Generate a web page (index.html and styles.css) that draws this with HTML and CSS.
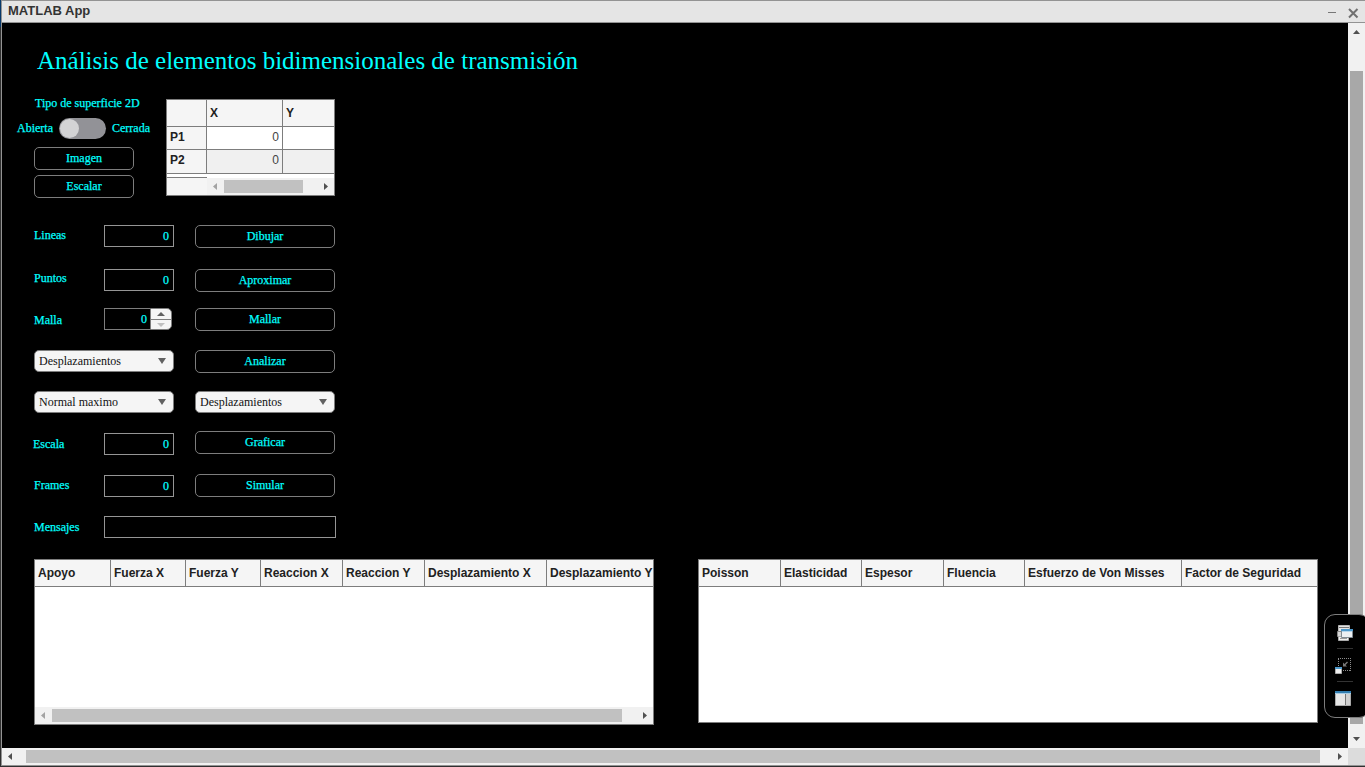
FILE: index.html
```html
<!DOCTYPE html>
<html lang="es">
<head>
<meta charset="utf-8">
<title>MATLAB App</title>
<link rel="stylesheet" href="styles.css">
</head>
<body>
<div class="window">
  <header class="titlebar">
    <span class="caption">MATLAB App</span>
    <svg class="winbtns" width="32" height="14" viewBox="0 0 32 14">
      <path d="M1 6.500h8" stroke="#777" stroke-width="1"/>
      <path d="M22 3l8.500 8.500M30.500 3l-8.500 8.500" stroke="#707070" stroke-width="2"/>
    </svg>
  </header>
  <div class="middle">
    <main class="canvas">
      <h1 class="heading">Análisis de elementos bidimensionales de transmisión</h1>
      <section class="top">
        <div class="surface">
          <div class="surface-title">Tipo de superficie 2D</div>
          <div class="switch-row"><span class="sw-left">Abierta</span><span class="switch"><i class="knob"></i></span><span class="sw-right">Cerrada</span></div>
          <button class="btn small">Imagen</button>
          <button class="btn small">Escalar</button>
        </div>
        <div class="points">
          <div class="prow head"><span class="rh"></span><span class="cx">X</span><span class="cy">Y</span></div>
          <div class="prow p1"><span class="rh">P1</span><span class="cx">0</span><span class="cy"></span></div>
          <div class="prow p2"><span class="rh">P2</span><span class="cx">0</span><span class="cy"></span></div>
          <div class="gap"><span></span></div>
          <div class="pfoot">
            <span class="corner"></span>
            <div class="hbar">
              <svg class="arr" width="17" height="17"><path d="M10 5v7l-4-3.500z" fill="#a3a3a3"/></svg>
              <span class="thumb pthumb"></span>
              <svg class="arr end" width="17" height="17"><path d="M7 5v7l4-3.500z" fill="#505050"/></svg>
            </div>
          </div>
        </div>
      </section>
      <section class="form">
        <div class="row r1"><label>Lineas</label><span class="field">0</span><button class="btn">Dibujar</button></div>
        <div class="row r2"><label>Puntos</label><span class="field">0</span><button class="btn">Aproximar</button></div>
        <div class="row r3"><label>Malla</label>
          <span class="spinner"><span class="val">0</span><span class="steps"><span class="up"><svg width="8" height="4"><path d="M0 4h8l-4-4z" fill="#616161"/></svg></span><span class="down"><svg width="8" height="4"><path d="M0 0h8l-4 4z" fill="#c0c0c0"/></svg></span></span></span>
          <button class="btn">Mallar</button></div>
        <div class="row r4"><span class="drop">Desplazamientos<svg width="8" height="6"><path d="M0 0h8l-4 6z" fill="#616161"/></svg></span><button class="btn">Analizar</button></div>
        <div class="row r5"><span class="drop">Normal maximo<svg width="8" height="6"><path d="M0 0h8l-4 6z" fill="#616161"/></svg></span><span class="drop">Desplazamientos<svg width="8" height="6"><path d="M0 0h8l-4 6z" fill="#616161"/></svg></span></div>
        <div class="row r6"><label>Escala</label><span class="field">0</span><button class="btn">Graficar</button></div>
        <div class="row r7"><label>Frames</label><span class="field">0</span><button class="btn">Simular</button></div>
        <div class="row r8"><label>Mensajes</label><span class="field wide"></span></div>
      </section>
      <section class="tables">
        <div class="table results">
          <div class="thead"><span>Apoyo</span><span>Fuerza X</span><span>Fuerza Y</span><span>Reaccion X</span><span>Reaccion Y</span><span>Desplazamiento X</span><span>Desplazamiento Y</span></div>
          <div class="tbody"></div>
          <div class="hbar">
            <svg class="arr" width="17" height="17"><path d="M10 5v7l-4-3.500z" fill="#a3a3a3"/></svg>
            <span class="thumb rthumb"></span>
            <svg class="arr end" width="17" height="17"><path d="M7 5v7l4-3.500z" fill="#505050"/></svg>
          </div>
        </div>
        <div class="table material">
          <div class="thead"><span>Poisson</span><span>Elasticidad</span><span>Espesor</span><span>Fluencia</span><span>Esfuerzo de Von Misses</span><span>Factor de Seguridad</span></div>
          <div class="tbody"></div>
        </div>
      </section>
    </main>
    <div class="vbar">
      <svg width="17" height="17"><path d="M5 11h7l-3.500-4z" fill="#505050"/></svg>
      <span class="vthumb"></span>
      <svg class="vend" width="17" height="17"><path d="M5 6h7l-3.500 4z" fill="#505050"/></svg>
    </div>
  </div>
  <div class="bottom">
    <div class="hbar">
      <svg class="arr" width="17" height="17"><path d="M10 5v7l-4-3.500z" fill="#505050"/></svg>
      <span class="thumb mthumb"></span>
      <svg class="arr end" width="17" height="17"><path d="M7 5v7l4-3.500z" fill="#505050"/></svg>
    </div>
    <span class="sizer"></span>
  </div>
</div>
<aside class="dock">
  <svg width="16" height="16" viewBox="0 0 16 16">
    <path d="M1.500 .5h11v11h-11z" fill="#e4e4e4" stroke="#b5b5b5"/><path d="M2 2.500h10" stroke="#777"/>
    <path d="M.5 6.500h9v5h-9z" fill="#d6d6d6" stroke="#888"/>
    <path d="M1.500 11.500h10v4h-10z" fill="#eee" stroke="#aaa"/><path d="M3 13.500h7" stroke="#999"/>
    <path d="M4.500 4.500h11v8h-11z" fill="#eceff2" stroke="#808a92"/><path d="M4 4h12v2H4z" fill="#4c98cb"/><path d="M5 6h10v1H5z" fill="#b5d6ec"/>
  </svg>
  <i></i>
  <svg width="17" height="16" viewBox="0 0 17 16">
    <path d="M3.500 8V.5M3 .5h13M15.500 0v13M8 12.500h8" fill="none" stroke="#8c8c8c" stroke-dasharray="1 1"/>
    <path d="M12.500 4L9 7.500" stroke="#777" stroke-width="1.400"/><path d="M8 4.500v4h4z" fill="#777"/>
    <path d="M.5 9.500h6v6h-6z" fill="#eee" stroke="#aaa"/><path d="M0 9h7v2H0z" fill="#4c98cb"/>
  </svg>
  <i></i>
  <svg width="16" height="15" viewBox="0 0 16 15">
    <path d="M.5 .5h15v14H.5z" fill="#e6e6e6" stroke="#aaa"/><path d="M0 0h16v2H0z" fill="#327daf"/><path d="M0 2h16v1H0z" fill="#a6cbe4"/><path d="M10.500 3v11" stroke="#777"/><path d="M11 3h4v11h-4z" fill="#d0d0d0"/>
  </svg>
</aside>
</body>
</html>
```
FILE: styles.css
```css
* { box-sizing: border-box; }
body { margin: 0; width: 1365px; height: 767px; overflow: hidden; background: #1a1a1a;
  font: 12px/14px "Liberation Serif", "Times New Roman", serif; color: #00ffff; position: relative; }
button { font: inherit; color: inherit; background: none; padding: 0; }
svg { display: block; flex: none; }
.window { height: 767px; display: flex; flex-direction: column; border-bottom: 1px solid #1b1b1b;
  border-left: 1px solid #303030; border-image: linear-gradient(#08396a 28px, #303030 28px) 1; border-top: 0; border-right: 0; }
.window::before { content: ""; height: 1px; background: #939393; }
.titlebar { height: 22px; background: #e5e5e5; border-bottom: 1px solid #939393; border-left: 1px solid #939393;
  display: flex; justify-content: space-between; padding: 2px 6px 0 6px; color: #333;
  font: bold 13px/15px "Liberation Sans", Arial, sans-serif; }
.winbtns { margin-top: 3px; }
.middle { display: flex; height: 725px; }
.canvas { width: 1347px; border-left: 1px solid #939393; background: #000; padding: 23px 0 0 32px; }
.heading { margin: 0 0 0 3px; font-size: 25px; line-height: 30px; font-weight: normal; height: 53px; white-space: nowrap; }
.top { display: flex; height: 126px; }
.surface { width: 132px; }
.surface-title { margin: -3px 0 8px 1px; height: 14px; }
.surface, .row label, .row .btn, .field, .val { -webkit-text-stroke: .25px #00ffff; }
.switch-row { display: flex; margin-left: -18px; height: 21px; width: 150px; align-items: center; white-space: nowrap; }
.sw-left { width: 42px; margin-left: 1px; }
.sw-left, .sw-right { padding-bottom: 1px; }
.switch { width: 47px; height: 21px; border-radius: 11px; background: #929297; padding: 1px; margin-right: 6px; flex: none; }
.knob { display: block; width: 19px; height: 19px; border-radius: 50%; background: #d3d3d5; }
.btn { width: 140px; height: 23px; border: 1px solid #7d7d7d; border-radius: 5px; display: flex; justify-content: center; align-items: center; padding-bottom: 1px; flex: none; }
.small { width: 100px; margin: 8px 0 5px; }
.small + .small { margin: 0; }
.points { width: 169px; height: 97px; border: 1px solid #7d7d7d; background: #fff; color: #212121;
  font: 12px/14px "Liberation Sans", Arial, sans-serif; display: flex; flex-direction: column; }
.prow { display: flex; border-bottom: 1px solid #7d7d7d; height: 24px; }
.prow span { display: flex; align-items: center; padding: 0 3px; }
.head { height: 27px; background: #f5f5f5; font-weight: bold; }
.p1 { height: 23px; }
.p2 { background: #f0f0f0; }
.p1 .cx, .p2 .cx { justify-content: flex-end; padding-bottom: 2px; color: #444; }
.rh { width: 40px; background: #f5f5f5; border-right: 1px solid #7d7d7d; font-weight: bold; }
.prow .rh { padding-bottom: 2px; }
.p2 .rh, .p2 .cx { padding-bottom: 3px !important; }
.cx { width: 76px; border-right: 1px solid #7d7d7d; }
.gap { height: 4px; }
.gap span { display: block; width: 40px; height: 4px; border-bottom: 1px solid #7d7d7d; }
.pfoot { display: flex; }
.corner { width: 40px; height: 17px; background: #f5f5f5; }
.hbar { display: flex; flex: 1; height: 17px; background: #f1f1f1; align-items: center; }
.thumb { height: 13px; background: #c1c1c1; }
.end { margin-left: auto; }
.pthumb { width: 79px; }
.rthumb { width: 570px; }
.mthumb { width: 1294px; margin-left: 7px; }
.row { display: flex; align-items: flex-start; }
.row label { width: 70px; white-space: nowrap; margin-top: 3px; }
.r1 { height: 44px; } .r2 { height: 39px; } .r3 { height: 42px; } .r4 { height: 41px; }
.r5 { height: 40px; } .r6 { height: 43px; } .r7 { height: 42px; } .r8 { height: 43px; }
.r2 label { margin-top: 2px; }
.r3 label { margin-top: 5px; }
.r6 label { margin: 6px 1px 0 -1px; }
.r7 label, .r8 label { margin-top: 4px; }
.field { width: 70px; height: 22px; border: 1px solid #959595; margin-right: 21px; display: flex; justify-content: flex-end; align-items: center; padding-right: 4px; }
.r6 .field { margin-top: 2px; }
.r7 .field { margin-top: 1px; }
.wide { width: 232px; margin: 0; }
.spinner { display: flex; width: 68px; height: 22px; margin-right: 23px; }
.val { width: 46px; border: 1px solid #7d7d7d; border-right: 0; display: flex; align-items: center; justify-content: flex-end; padding-right: 3px; }
.steps { width: 22px; border: 1px solid #7d7d7d; border-radius: 0 5px 5px 0; background: #f5f5f5; display: flex; flex-direction: column; }
.up, .down { display: flex; align-items: center; justify-content: center; }
.up { border-bottom: 1px solid #7d7d7d; height: 11px; }
.down { height: 9px; }
.drop { width: 140px; height: 22px; border: 1px solid #7d7d7d; border-radius: 5px; background: #f5f5f5; color: #111; display: flex; justify-content: space-between; align-items: center; padding: 0 7px 0 4px; margin-right: 21px; }
.tables { display: flex; align-items: flex-start; gap: 44px; }
.table { width: 620px; border: 1px solid #7d7d7d; background: #fff; display: flex; flex-direction: column; color: #212121; font: bold 12px/14px "Liberation Sans", Arial, sans-serif; }
.results { height: 166px; }
.material { height: 164px; }
.thead { height: 27px; background: #f5f5f5; border-bottom: 1px solid #7d7d7d; display: grid; overflow: hidden; }
.results .thead { grid-template-columns: 76px 75px 75px 82px 82px 122px 107px; }
.material .thead { grid-template-columns: 82px 81px 82px 81px 157px 136px; }
.thead span { border-right: 1px solid #7d7d7d; padding: 6px 0 0 3px; white-space: nowrap; overflow: hidden; }
.thead span:last-child { border: 0; }
.tbody { flex: 1; }
.table .hbar { flex: none; }
.vbar { width: 17px; background: #f1f1f1; display: flex; flex-direction: column; align-items: center; }
.vthumb { width: 13px; height: 653px; margin-top: 31px; background: #a8a8a8; }
.vend { margin-top: auto; }
.bottom { display: flex; height: 18px; border-bottom: 1px solid #939393; border-left: 1px solid #939393; }
.sizer { width: 17px; background: #dcdcdc; }
.dock { position: absolute; left: 1324px; top: 614px; width: 46px; height: 104px; background: #000; border: 1px solid #7d7d7d; border-radius: 11px; padding: 10px 0 0 11px; display: flex; flex-direction: column; align-items: flex-start; }
.dock i { width: 16px; height: 1px; background: #333; margin: 7px 0 9px 1px; }
.dock svg:first-child { margin-left: 1px; }
.dock svg:nth-of-type(2), .dock svg:nth-of-type(3) { margin-left: -1px; }
```
